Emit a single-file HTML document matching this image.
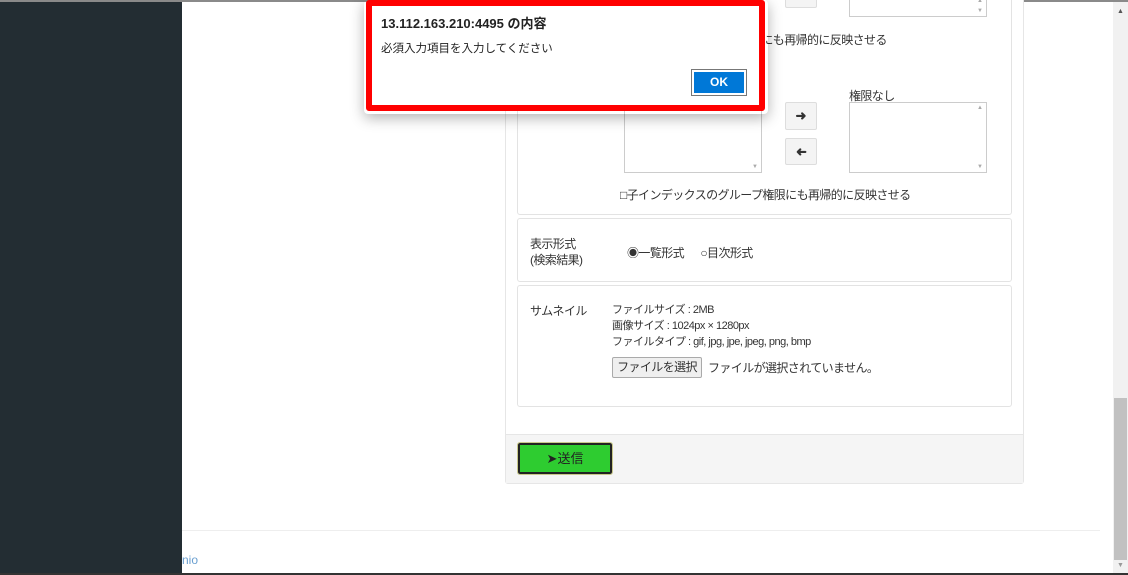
<!DOCTYPE html>
<html><head><meta charset="utf-8"><style>
*{margin:0;padding:0;box-sizing:border-box}
body{width:1128px;height:575px;overflow:hidden;background:#fff;position:relative;font-family:"Liberation Sans","Noto Sans CJK JP",sans-serif;font-size:12px;color:#333}
.a{position:absolute}
.box{position:absolute;border:1px solid #e3e3e3;border-radius:3px;background:#fff}
.sel{position:absolute;border:1px solid #ccc;background:#fff}
.sel:before{content:"▲";position:absolute;right:3px;top:2px;font-size:6px;color:#aaa}
.sel:after{content:"▼";position:absolute;right:3px;bottom:2px;font-size:6px;color:#aaa}
.btn{position:absolute;border:1px solid #ddd;background:#f4f4f4;border-radius:2px;text-align:center;font-size:13px;font-weight:bold;color:#333}
.j{font-size:12px;letter-spacing:-0.6px}
</style></head><body>
<div class="a" style="left:0;top:0;width:1128px;height:2px;background:#8a8a8a"></div>
<div class="a" style="left:0;top:2px;width:182px;height:571px;background:#232d33"></div>
<div class="a" style="left:0;top:573px;width:1128px;height:2px;background:#333"></div>
<div class="a" style="left:1113px;top:2px;width:15px;height:571px;background:#f1f1f1"></div>
<div class="a" style="left:1114px;top:398px;width:13px;height:162px;background:#c1c1c1"></div>
<div class="a" style="left:1117px;top:8px;font-size:7px;color:#555">▲</div>
<div class="a" style="left:1117px;top:562px;font-size:7px;color:#999">▼</div>
<div class="a" style="left:182px;top:530px;width:918px;height:1px;background:#eee"></div>
<div class="a" style="left:182px;top:553px;color:#6a9fd0;font-size:12px">nio</div>
<div class="box" style="left:505px;top:-5px;width:519px;height:489px;border-color:#e6e6e6"></div>
<div class="a" style="left:506px;top:434px;width:517px;height:49px;background:#f5f5f5;border-top:1px solid #e6e6e6"></div>
<div class="box" style="left:517px;top:-5px;width:495px;height:220px"></div>
<div class="btn" style="left:785px;top:-10px;width:32px;height:18px"></div>
<div class="sel" style="left:849px;top:-5px;width:138px;height:22px"></div>
<div class="a j" style="left:750px;top:31px">限にも再帰的に反映させる</div>
<div class="a j" style="left:849px;top:87px">権限なし</div>
<div class="sel" style="left:624px;top:100px;width:138px;height:73px"></div>
<div class="sel" style="left:849px;top:102px;width:138px;height:71px"></div>
<div class="btn" style="left:785px;top:102px;width:32px;height:28px;line-height:26px">➜</div>
<div class="btn" style="left:785px;top:138px;width:32px;height:27px;line-height:25px"><span style="display:inline-block;transform:scaleX(-1)">➜</span></div>
<div class="a j" style="left:620px;top:186px">□子インデックスのグループ権限にも再帰的に反映させる</div>
<div class="box" style="left:517px;top:218px;width:495px;height:64px"></div>
<div class="a j" style="left:530px;top:236px;line-height:16px">表示形式<br>(検索結果)</div>
<div class="a j" style="left:627px;top:244px">◉一覧形式 &nbsp;&nbsp;&nbsp;&nbsp; ○目次形式</div>
<div class="box" style="left:517px;top:285px;width:495px;height:122px"></div>
<div class="a j" style="left:530px;top:302px">サムネイル</div>
<div class="a" style="left:612px;top:302px;line-height:16px;font-size:11px;letter-spacing:-0.5px">ファイルサイズ : 2MB<br>画像サイズ : 1024px × 1280px<br>ファイルタイプ : gif, jpg, jpe, jpeg, png, bmp</div>
<div class="a j" style="left:612px;top:357px;width:90px;height:21px;border:1px solid #aaa;background:#efefef;border-radius:2px;text-align:center;line-height:19px">ファイルを選択</div>
<div class="a j" style="left:708px;top:359px">ファイルが選択されていません。</div>
<div class="a" style="left:518px;top:443px;width:94px;height:31px;background:#2ecc30;border:2px solid #222;outline:1px solid #c9c98a;border-radius:2px;text-align:center;line-height:27px;font-size:13px;color:#222">➤送信</div>
<div class="a" style="left:364px;top:0;width:404px;height:114px;box-shadow:0 4px 14px rgba(0,0,0,.3);border-radius:4px"></div>
<div class="a" style="left:366px;top:0;width:399px;height:111px;background:#fff;border:6px solid #f00;border-radius:3px"></div>
<div class="a" style="left:381px;top:13px;font-size:13px;font-weight:bold;color:#222">13.112.163.210:4495 の内容</div>
<div class="a" style="left:381px;top:40px;font-size:11.5px;color:#222">必須入力項目を入力してください</div>
<div class="a" style="left:691px;top:69px;width:56px;height:27px;border:1px solid #777;padding:2px;background:#fff"><div style="width:100%;height:100%;background:#0078d7;color:#fff;font-weight:bold;text-align:center;line-height:21px;font-size:12px">OK</div></div>
</body></html>
